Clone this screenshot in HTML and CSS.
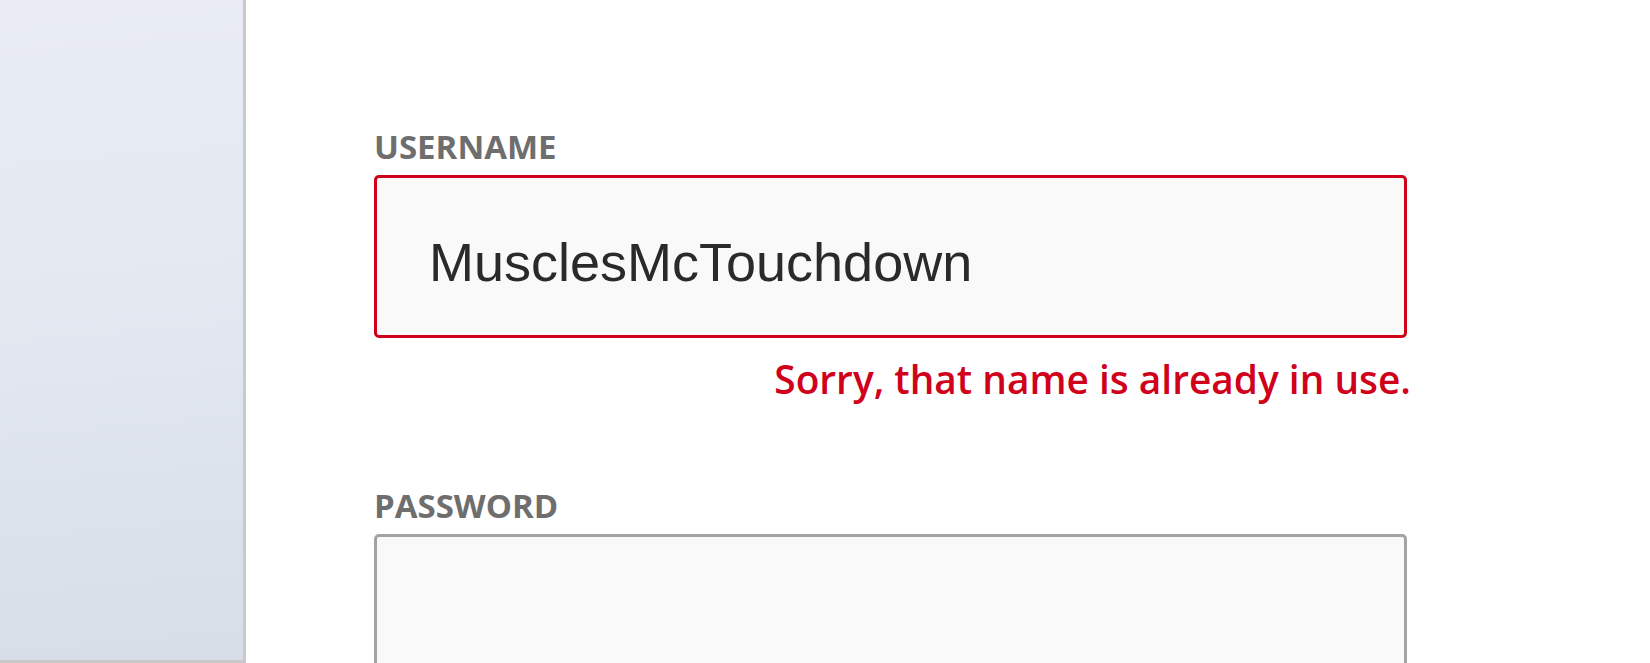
FILE: index.html
```html
<!DOCTYPE html>
<html lang="en">
<head>
<meta charset="utf-8">
<title>Sign up</title>
<link rel="stylesheet" href="styles.css">
</head>
<body>
<div class="page">
  <aside class="sidebar"></aside>
  <main class="main">
    <form class="form">
      <div class="group">
        <label class="label">USERNAME</label>
        <div class="field field--error"><span class="value">MusclesMcTouchdown</span></div>
        <p class="error">Sorry, that name is already in use.</p>
      </div>
      <div class="group group--password">
        <label class="label">PASSWORD</label>
        <div class="field"></div>
      </div>
    </form>
  </main>
</div>
</body>
</html>
```
FILE: styles.css
```css
html, body {
  margin: 0;
  padding: 0;
  background: #ffffff;
  overflow: hidden;
}

.page {
  display: flex;
  width: 1650px;
  height: 663px;
  overflow: hidden;
}

.sidebar {
  flex: 0 0 243px;
  height: 660px;
  background: linear-gradient(175deg, #e9ecf5 0%, #e3e8f1 45%, #d7dee8 100%);
  border-right: 3px solid #c9c9c9;
  border-bottom: 3px solid #c9c9c9;
}

.main {
  flex: 1;
  padding: 130px 0 0 128px;
}

.form {
  width: 1033px;
}

.label {
  display: block;
  margin: 0 0 12px 0;
  font-family: "Open Sans", "Liberation Sans", sans-serif;
  font-weight: 700;
  font-size: 33px;
  line-height: 33px;
  color: #6e6e6e;
}

.field {
  box-sizing: border-box;
  height: 163px;
  border: 3px solid #a3a3a3;
  border-radius: 5px;
  background: #f9f9f9;
  padding: 54px 40px 0 52px;
}

.field--error {
  border-color: #d0021b;
}

.value {
  display: block;
  font-family: "Liberation Sans", Arial, sans-serif;
  font-size: 54px;
  line-height: 60px;
  color: #2a2a2a;
}

.error {
  margin: 21px -4px 0 0;
  text-align: right;
  font-family: "Open Sans", "Liberation Sans", sans-serif;
  font-weight: 600;
  font-size: 38.85px;
  line-height: 39px;
  color: #d0021b;
}

.group--password {
  margin-top: 91px;
}
```
